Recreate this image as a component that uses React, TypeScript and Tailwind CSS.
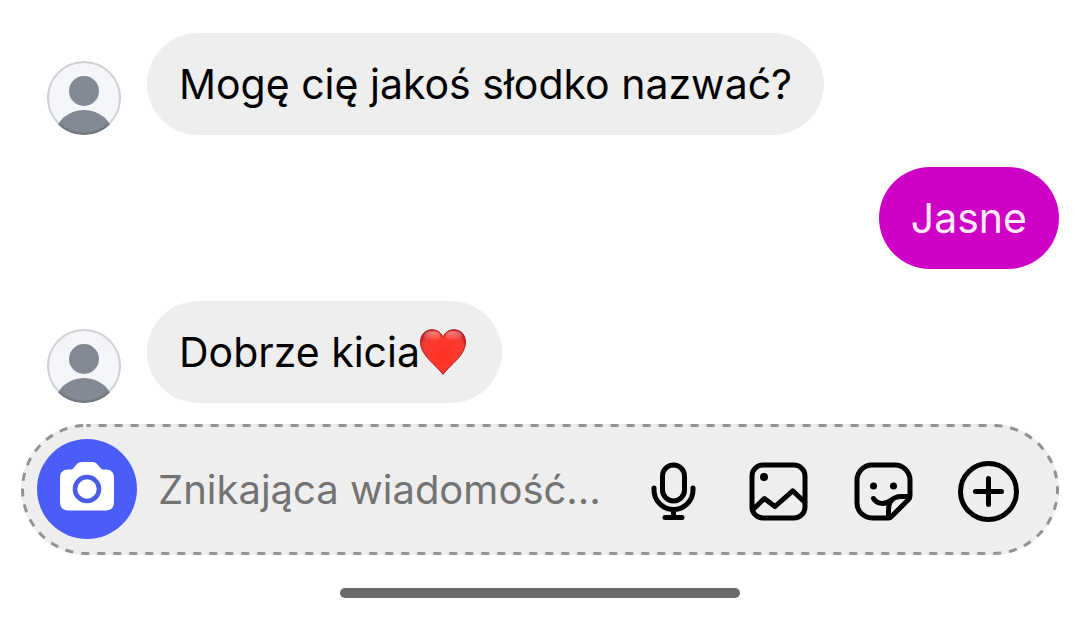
import React from "react";

interface Message {
  id: number;
  text: string;
  mine?: boolean;
  heart?: boolean;
}

const messages: Message[] = [
  { id: 1, text: "Mogę cię jakoś słodko nazwać?" },
  { id: 2, text: "Jasne", mine: true },
  { id: 3, text: "Dobrze kicia", heart: true },
];

function Avatar() {
  return (
    <svg className="size-[74px] shrink-0" viewBox="0 0 74 74" aria-hidden="true">
      <defs>
        <clipPath id="avatar-clip">
          <circle cx="37" cy="37" r="37" />
        </clipPath>
      </defs>
      <g clipPath="url(#avatar-clip)">
        <rect width="74" height="74" fill="#f3f5f8" />
        <circle cx="37" cy="30" r="15" fill="#838993" />
        <ellipse cx="37" cy="75" rx="29" ry="26" fill="#838993" />
      </g>
      <circle cx="37" cy="37" r="36" fill="none" stroke="#000" strokeOpacity="0.15" strokeWidth="2" />
    </svg>
  );
}

function Heart() {
  return (
    <svg className="mr-1 h-[46px] w-[46px] shrink-0" viewBox="0 0 46 46" role="img" aria-label="heart">
      <defs>
        <radialGradient id="heart-fill" cx="0.5" cy="0.55" r="0.6">
          <stop offset="0" stopColor="#ff2f20" />
          <stop offset="0.6" stopColor="#fb3a2e" />
          <stop offset="0.85" stopColor="#ee3a33" />
          <stop offset="1" stopColor="#c02020" />
        </radialGradient>
        <linearGradient id="heart-shine" x1="0" y1="0" x2="0" y2="1">
          <stop offset="0" stopColor="#fff" stopOpacity="0.4" />
          <stop offset="1" stopColor="#fff" stopOpacity="0" />
        </linearGradient>
      </defs>
      <path
        d="M23 45.5C20 41 14 36 9 30.5C3.5 24.5 0.5 19 0.5 13C0.5 5.5 5.5 0.7 12 0.7C17 0.7 21 3.5 23 8C25 3.5 29 0.7 34 0.7C40.5 0.7 45.5 5.5 45.5 13C45.5 19 42.5 24.5 37 30.5C32 36 26 41 23 45.5Z"
        fill="url(#heart-fill)"
        stroke="#b01a1c"
      />
      <ellipse cx="12" cy="7" rx="8" ry="5" fill="url(#heart-shine)" />
      <ellipse cx="34" cy="7" rx="8" ry="5" fill="url(#heart-shine)" />
    </svg>
  );
}

function MessageRow({ message: m }: { message: Message }) {
  if (m.mine) {
    return (
      <li className="flex justify-end">
        <p className="flex min-h-[102px] items-center rounded-[51px] bg-[#ce00c6] px-8 text-[#fdeafc]">{m.text}</p>
      </li>
    );
  }
  return (
    <li className="flex items-end gap-[26px] pl-[26px]">
      <Avatar />
      <p className="flex min-h-[102px] items-center rounded-[51px] bg-[#eeeeee] px-8 text-black">
        {m.text}
        {m.heart && <Heart />}
      </p>
    </li>
  );
}

function IconButton({ label, children }: { label: string; children: React.ReactNode }) {
  return (
    <button type="button" aria-label={label} className="shrink-0 cursor-pointer">
      <svg
        className="size-16 overflow-visible"
        viewBox="-2 -4 64 64"
        fill="none"
        stroke="#000"
        strokeWidth="5"
        strokeLinecap="round"
        strokeLinejoin="round"
      >
        {children}
      </svg>
    </button>
  );
}

function Composer() {
  return (
    <form className="relative flex h-[131px] items-center rounded-full bg-[#eeeeee] pr-[38px] pb-px pl-4">
      {/* dashed outline, dashes longer than border-dashed gives */}
      <svg className="pointer-events-none absolute inset-0 h-full w-full overflow-visible" aria-hidden="true">
        <rect
          className="h-[calc(100%-3px)] w-[calc(100%-3px)]"
          x="1.5"
          y="1.5"
          rx="64"
          fill="none"
          stroke="#929292"
          strokeWidth="3"
          strokeDasharray="8 8"
          strokeDashoffset="100"
        />
      </svg>
      <button
        type="button"
        aria-label="Aparat"
        className="flex size-[100px] shrink-0 cursor-pointer items-center justify-center rounded-full bg-[#4a5df9]"
      >
        <svg className="size-[60px]" viewBox="0 0 60 60">
          <path
            d="M25 3H35C38 3 39.5 4 41 6L43 8.5C44 10 45 10.5 47 10.5H49C54 10.5 57 13.5 57 18.5V43C57 48.5 54 51.5 49 51.5H11C6 51.5 3 48.5 3 43V18.5C3 13.5 6 10.5 11 10.5H13C15 10.5 16 10 17 8.5L19 6C20.5 4 22 3 25 3Z"
            fill="#fff"
          />
          <circle cx="30" cy="30" r="12" fill="none" stroke="#4b5de8" strokeWidth="4.6" />
        </svg>
      </button>
      <input
        type="text"
        aria-label="Wiadomość"
        placeholder="Znikająca wiadomość…"
        className="min-w-0 flex-1 bg-transparent pt-0.5 pl-[21px] text-[40px] text-black outline-none placeholder:text-[#737373]"
      />
      <div className="flex shrink-0 gap-[41px]">
        <IconButton label="Wiadomość głosowa">
          <rect x="18.5" y="4" width="22" height="36" rx="11" />
          <path d="M10 27v2a19.5 19.5 0 0 0 39 0v-2M29.5 49v7M21 56.5h17" />
        </IconButton>
        <IconButton label="Galeria">
          <rect x="3" y="4" width="53" height="53" rx="11" />
          <circle cx="15" cy="16" r="4" fill="#000" stroke="none" />
          <path d="M3.5 49L15.3 37.5L26 45.5L43.7 29.8L55.5 41" />
        </IconButton>
        <IconButton label="Naklejka">
          <path d="M35 57H18A15 15 0 0 1 3 42V19A15 15 0 0 1 18 4H41A15 15 0 0 1 56 19V35Q56 37 54.5 38.5L37 56Q36 57 35 57Z" />
          <path d="M34.5 56V49C34.5 41 39 35.5 47 35.5H55" />
          <path d="M19.5 37.5C23 43.5 31 44 37.5 39" />
          <circle cx="19.5" cy="25" r="3.5" fill="#000" stroke="none" />
          <circle cx="39.5" cy="25" r="3.5" fill="#000" stroke="none" />
        </IconButton>
        <IconButton label="Więcej">
          <circle cx="29.5" cy="30.5" r="28" />
          <path d="M16.5 30.5h26M29.5 17.5v26" />
        </IconButton>
      </div>
    </form>
  );
}

export default function App() {
  return (
    <main className="flex min-h-screen flex-col bg-white px-[21px] pt-[33px] pb-5 font-['Inter',sans-serif] text-[41px] leading-[52px]">
      <ul className="mb-[21px] flex flex-col gap-8">
        {messages.map((m) => (
          <MessageRow key={m.id} message={m} />
        ))}
      </ul>
      <Composer />
      <div className="mx-auto mt-[33px] h-[10px] w-[400px] max-w-full rounded-full bg-[#6a6a6a]" />
    </main>
  );
}
